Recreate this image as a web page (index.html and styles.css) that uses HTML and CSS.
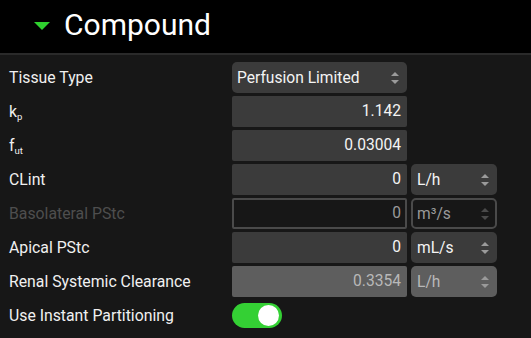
FILE: index.html
```html
<!DOCTYPE html>
<html>
<head>
<meta charset="utf-8">
<link rel="stylesheet" href="styles.css">
</head>
<body>
<div class="header">
  <span class="caret"></span>
  <span class="title">Compound</span>
</div>
<div class="panel">
  <div class="row">
    <div class="label">Tissue Type</div>
    <div class="select wide"><span>Perfusion Limited</span><span class="arrows"></span></div>
  </div>
  <div class="row">
    <div class="label">k<sub>p</sub></div>
    <div class="input">1.142</div>
  </div>
  <div class="row">
    <div class="label">f<sub>ut</sub></div>
    <div class="input">0.03004</div>
  </div>
  <div class="row">
    <div class="label">CLint</div>
    <div class="input">0</div>
    <div class="select unit"><span>L/h</span><span class="arrows"></span></div>
  </div>
  <div class="row off">
    <div class="label">Basolateral PStc</div>
    <div class="input">0</div>
    <div class="select unit"><span>m³/s</span><span class="arrows"></span></div>
  </div>
  <div class="row">
    <div class="label">Apical PStc</div>
    <div class="input">0</div>
    <div class="select unit"><span>mL/s</span><span class="arrows"></span></div>
  </div>
  <div class="row ro">
    <div class="label">Renal Systemic Clearance</div>
    <div class="input">0.3354</div>
    <div class="select unit"><span>L/h</span><span class="arrows"></span></div>
  </div>
  <div class="row">
    <div class="label">Use Instant Partitioning</div>
    <div class="toggle"><span class="knob"></span></div>
  </div>
</div>
</body>
</html>
```
FILE: styles.css
```css
html, body {
  margin: 0;
  padding: 0;
  background: #171717;
  font-family: Roboto, "Liberation Sans", sans-serif;
  color: #f2f2f2;
}
.header {
  background: #000;
  border-bottom: 2px solid #2a2a2a;
  display: flex;
  align-items: center;
  padding-left: 34px;
  box-sizing: border-box;
  height: 55px;
}
.caret {
  width: 0;
  height: 0;
  border-left: 8px solid transparent;
  border-right: 8px solid transparent;
  border-top: 8px solid #2fd12f;
  margin-right: 14px;
  margin-top: -2px;
}
.title {
  font-size: 30px;
  color: #fff;
  margin-top: -4px;
}
.panel {
  padding: 7px 0 0 9px;
  display: flex;
  flex-direction: column;
  gap: 3px;
}
.row {
  display: flex;
  align-items: center;
  height: 31px;
  gap: 4px;
}
.label {
  width: 219px;
  font-size: 15.8px;
  color: #f0f0f0;
}
.label sub {
  font-size: 9.5px;
  vertical-align: -3px;
}
.input {
  width: 175px;
  height: 31px;
  box-sizing: border-box;
  background: #3b3b3b;
  border-radius: 2px;
  text-align: right;
  padding-right: 6px;
  line-height: 31px;
  font-size: 15.6px;
  color: #f4f4f4;
}
.select {
  height: 31px;
  box-sizing: border-box;
  background: #3b3b3b;
  border-radius: 5px;
  display: flex;
  align-items: center;
  justify-content: space-between;
  font-size: 15.6px;
  color: #f4f4f4;
  padding: 0 8px 0 5px;
}
.select.wide { width: 175px; }
.select.unit { width: 86px; padding-left: 6px; }
.arrows {
  position: relative;
  width: 8px;
  height: 12px;
}
.arrows::before, .arrows::after {
  content: "";
  position: absolute;
  left: 0;
  border-left: 4px solid transparent;
  border-right: 4px solid transparent;
}
.arrows::before { top: 0; border-bottom: 4px solid #9a9a9a; }
.arrows::after { bottom: 0; border-top: 4px solid #9a9a9a; }
.row.off .label { color: #4e4e4e; }
.row.off .input, .row.off .select {
  background: #171717;
  border: 2px solid #4a4a4a;
  color: #9a9a9a;
}
.row.off .input { line-height: 27px; padding-right: 4px; }
.row.off .select { padding-left: 4px; padding-right: 6px; }
.row.off .arrows::before { border-bottom-color: #4a4a4a; }
.row.off .arrows::after { border-top-color: #4a4a4a; }
.row.ro .input, .row.ro .select {
  background: #5e5e5e;
  color: #b8b8b8;
}
.toggle {
  width: 50px;
  height: 25px;
  border-radius: 13px;
  background: #34d034;
  position: relative;
}
.knob {
  position: absolute;
  right: 3px;
  top: 2px;
  width: 21px;
  height: 21px;
  border-radius: 50%;
  background: #fff;
}
```
